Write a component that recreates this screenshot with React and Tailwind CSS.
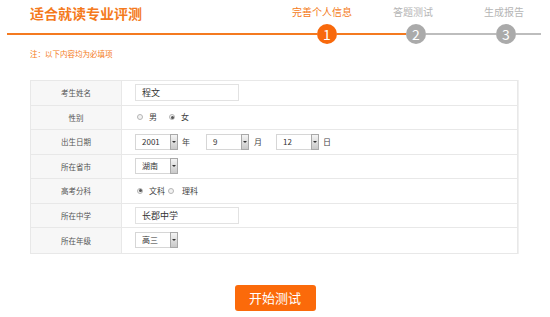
import React from "react";

const font = { fontFamily: '"Noto Sans CJK SC", "Noto Sans", sans-serif' };

const Select = ({ value, w = "w-[43px]" }) => (
  <div className={`inline-flex h-[16px] ${w} items-stretch border border-[#d6d6d6] bg-white`}>
    <span className="flex-1 pl-[6px] text-[8px] leading-[14px] text-[#333]">{value}</span>
    <span className="my-[-1px] mr-[-1px] flex w-[8px] items-center justify-center border border-[#a9a9a9] bg-gradient-to-b from-[#f4f4f4] to-[#c9c9c9]">
      <span className="block h-0 w-0 border-x-[2px] border-t-[2px] border-x-transparent border-t-[#333]" />
    </span>
  </div>
);

const Radio = ({ checked }) => (
  <span className="inline-flex h-[6px] w-[6px] items-center justify-center rounded-full border border-[#b5b5b5] bg-[#f3f3f3]">
    {checked && <span className="block h-[3px] w-[3px] rounded-full bg-[#555]" />}
  </span>
);

const Input = ({ value }) => (
  <div className="flex h-[17px] w-[104px] items-center border border-[#e2e2e2] bg-white pl-[6px] text-[9px] text-[#333]">
    {value}
  </div>
);

const Row = ({ label, children, last }) => (
  <div className={`grid h-[24.5px] grid-cols-[91px_1fr] ${last ? "" : "border-b border-[#e8e8e8]"}`}>
    <div className="flex items-center justify-center border-r border-[#e8e8e8] bg-[#f7f7f7] text-[7.5px] text-[#555]">
      {label}
    </div>
    <div className="flex items-center pl-[13px] text-[8px] text-[#444]">{children}</div>
  </div>
);

export default function App() {
  return (
    <div className="h-[317px] w-[550px] bg-white" style={font}>
      {/* header */}
      <div className="flex items-start pt-[6px]">
        <div className="w-[287px] pl-[30px]">
          <h1 className="text-[14px] font-bold leading-[15px] text-[#f47a20]">适合就读专业评测</h1>
        </div>
        <div className="mt-[1px] w-[70px] text-center text-[10px] leading-[10px] text-[#f47a20]">完善个人信息</div>
        <div className="ml-[21px] mt-[1px] w-[70px] text-center text-[10px] leading-[10px] text-[#b5b5b5]">答题测试</div>
        <div className="ml-[21px] mt-[1px] w-[70px] text-center text-[10px] leading-[10px] text-[#b5b5b5]">生成报告</div>
      </div>
      <div className="mt-[3px] flex h-[20px] items-center px-[7px]">
        <div className="h-[2px] w-[310px] bg-[#f47a20]" />
        <div className="flex h-[20px] w-[20px] items-center justify-center rounded-full bg-[#f8690c] text-[14px] leading-none text-white">1</div>
        <div className="h-[2px] w-[69px] bg-[#f47a20]" />
        <div className="flex h-[20px] w-[20px] items-center justify-center rounded-full bg-[#aaaaaa] text-[14px] leading-none text-white">2</div>
        <div className="h-[2px] w-[70px] bg-[#bdbdbd]" />
        <div className="flex h-[20px] w-[20px] items-center justify-center rounded-full bg-[#aaaaaa] text-[14px] leading-none text-white">3</div>
        <div className="h-[2px] w-[25px] bg-[#bdbdbd]" />
      </div>

      <p className="ml-[30px] mt-[6px] text-[7.5px] leading-[8px] text-[#f47a20]">注：以下内容均为必填项</p>

      {/* form table */}
      <div className="ml-[30px] mt-[22px] w-[488px] border border-[#e8e8e8] shadow-[1px_0_0_#f0f0f0]">
        <Row label="考生姓名">
          <Input value="程文" />
        </Row>
        <Row label="性别">
          <span className="ml-[2px] flex items-center gap-[6px]">
            <Radio />
            <span>男</span>
          </span>
          <span className="ml-[12px] flex items-center gap-[6px]">
            <Radio checked />
            <span>女</span>
          </span>
        </Row>
        <Row label="出生日期">
          <Select value="2001" />
          <span className="ml-[4px]">年</span>
          <span className="ml-[16px]"><Select value="9" /></span>
          <span className="ml-[5px]">月</span>
          <span className="ml-[14px]"><Select value="12" /></span>
          <span className="ml-[4px]">日</span>
        </Row>
        <Row label="所在省市">
          <Select value="湖南" />
        </Row>
        <Row label="高考分科">
          <span className="ml-[2px] flex items-center gap-[6px]">
            <Radio checked />
            <span>文科</span>
          </span>
          <span className="ml-[3px] flex items-center gap-[8px]">
            <Radio />
            <span>理科</span>
          </span>
        </Row>
        <Row label="所在中学">
          <Input value="长郡中学" />
        </Row>
        <Row label="所在年级" last>
          <Select value="高三" />
        </Row>
      </div>

      <div className="mt-[31px] flex justify-center">
        <button className="h-[26px] w-[81px] rounded-[3px] bg-[#fb6a0a] text-[13px] text-white">开始测试</button>
      </div>
    </div>
  );
}
